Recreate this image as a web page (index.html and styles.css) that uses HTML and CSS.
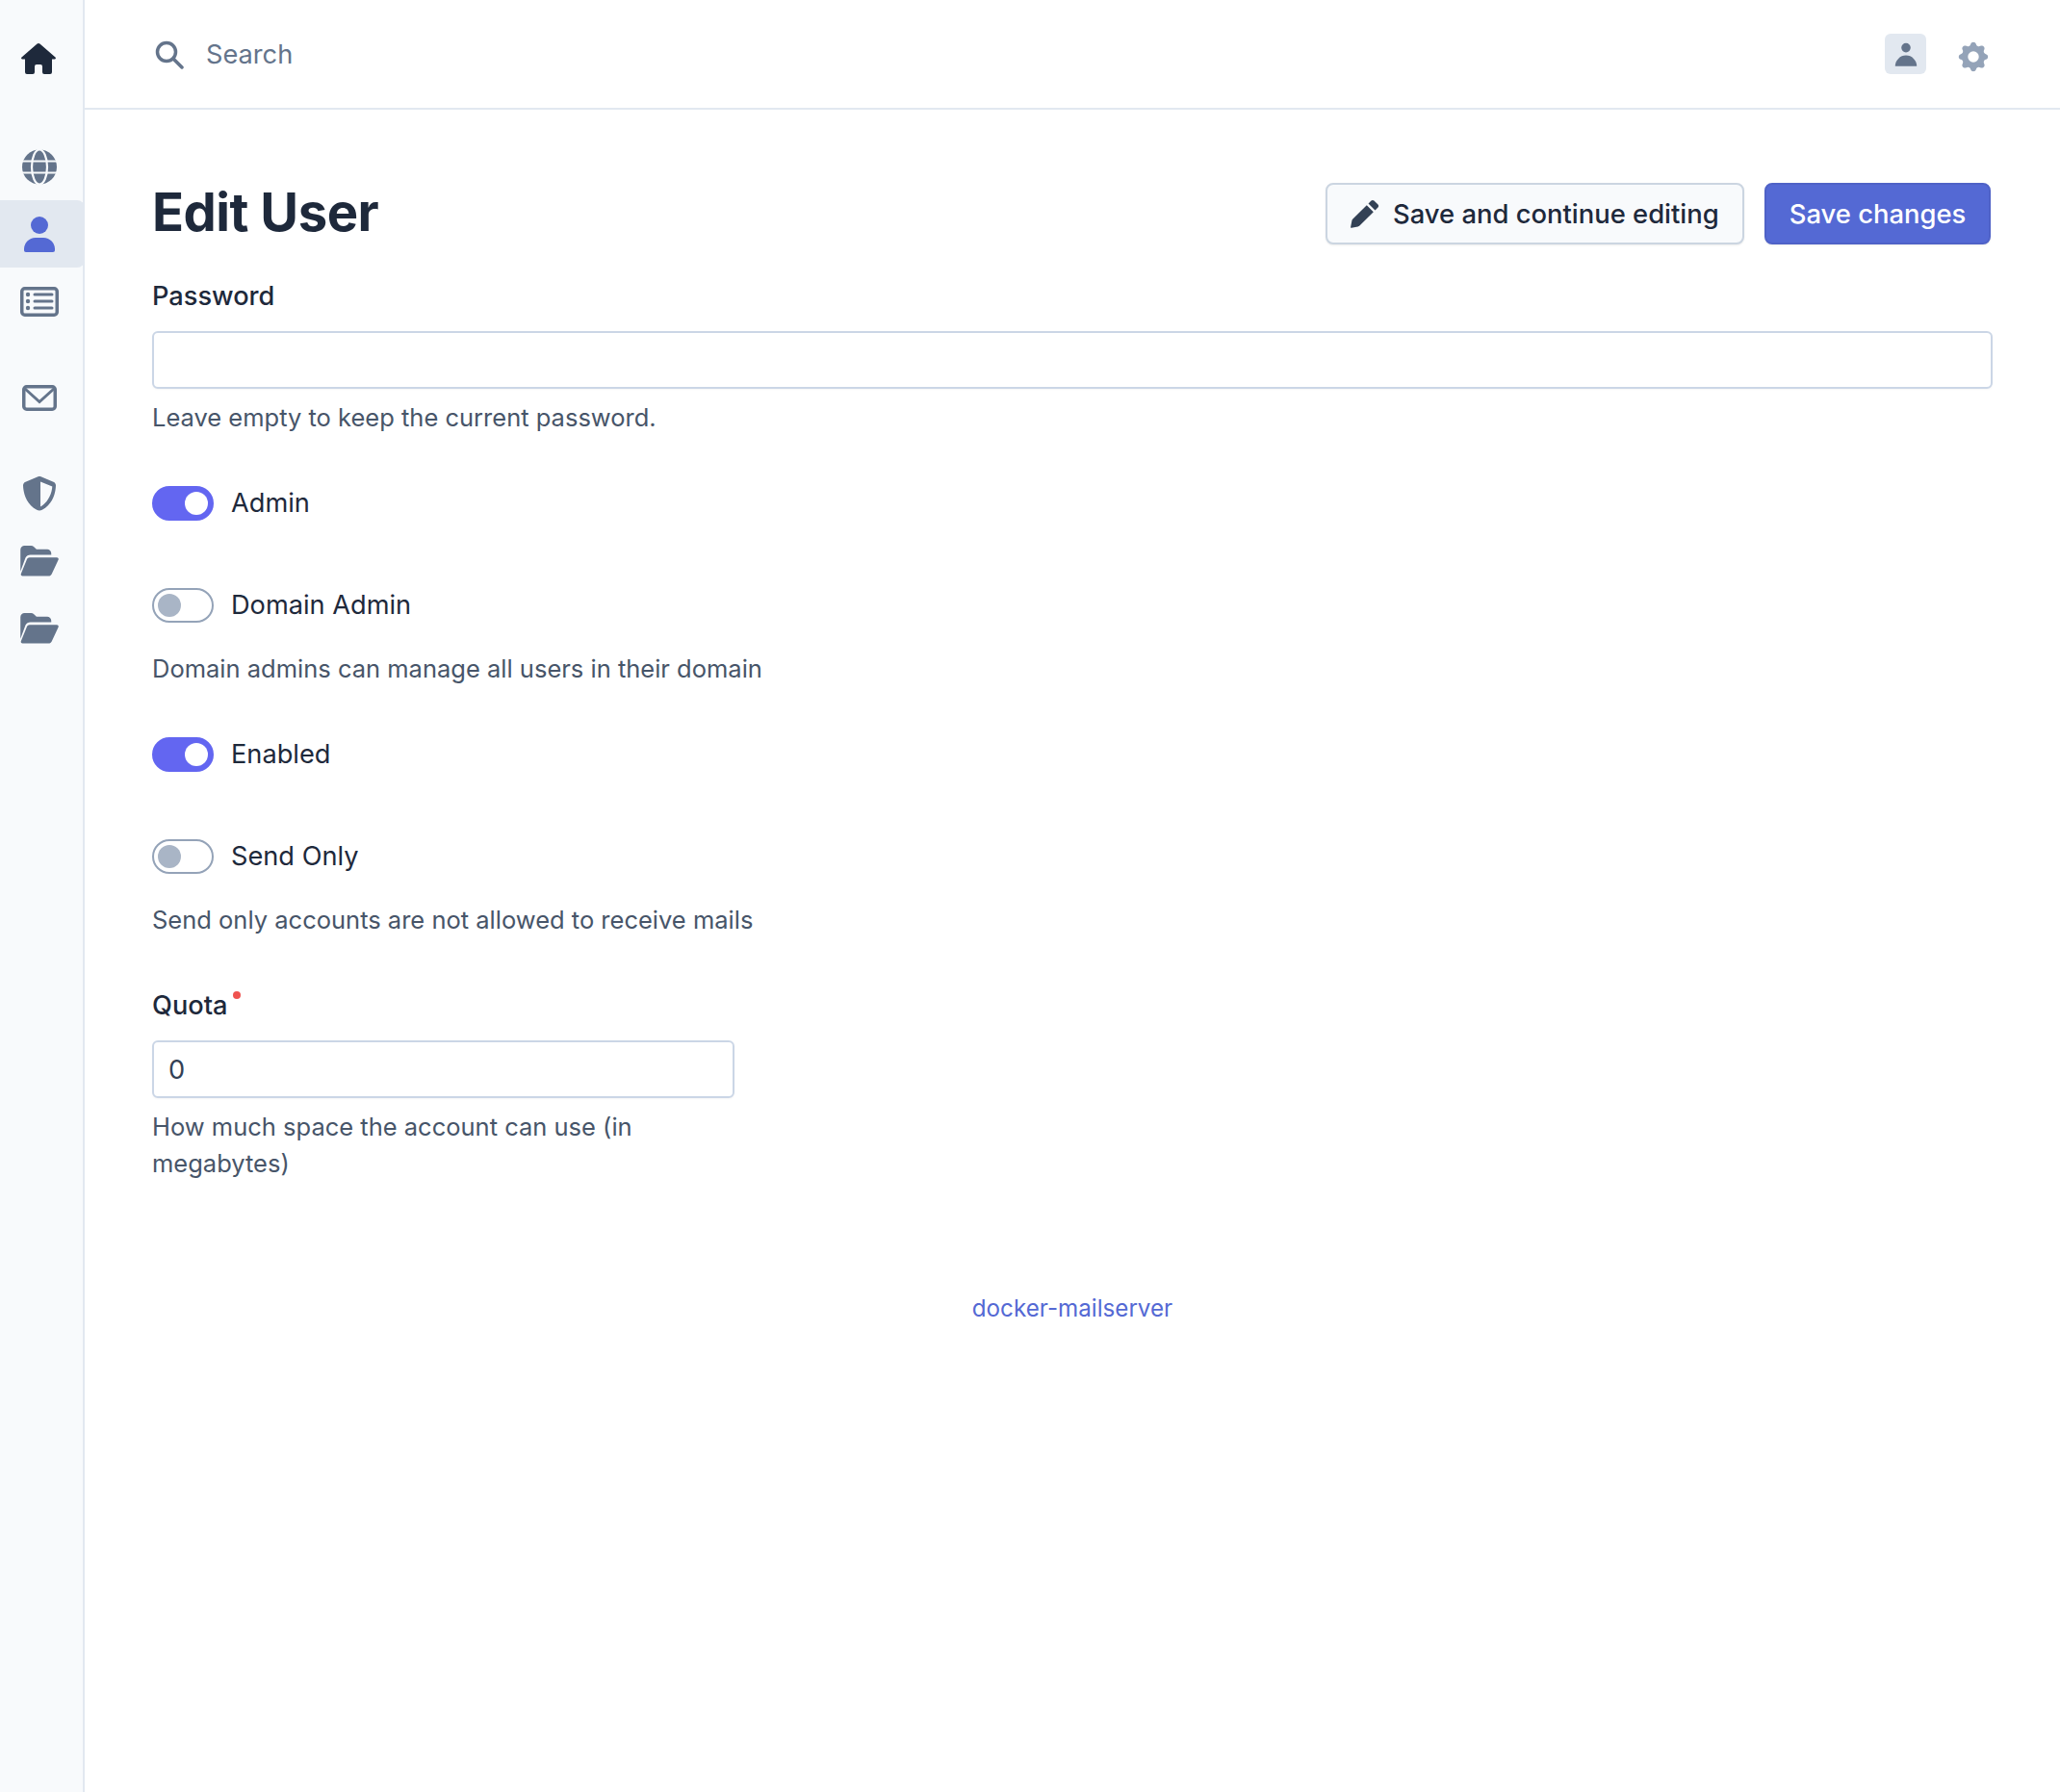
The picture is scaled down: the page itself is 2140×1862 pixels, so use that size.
FILE: index.html
```html
<!DOCTYPE html>
<html lang="en">
<head>
<meta charset="utf-8">
<title>Edit User</title>
<link rel="stylesheet" href="styles.css">
</head>
<body>
<div class="app">
  <nav class="sidebar">
    <a class="nav-item nav-home"><svg class="ic" viewBox="0 0 40 40"><path class="navy" d="M19 3c.5 0 1 .2 1.400.5L36.500 17.500c.8.7.4 2-.7 2H33V33a2 2 0 0 1-2 2h-6a2 2 0 0 1-2-2v-6a2 2 0 0 0-2-2h-4a2 2 0 0 0-2 2v6a2 2 0 0 1-2 2H7a2 2 0 0 1-2-2V19.500H2.200c-1.100 0-1.500-1.300-.7-2L17.600 3.500C18 3.200 18.500 3 19 3z"/></svg></a>
    <div class="nav-group nav-group-first">
      <a class="nav-item"><svg class="ic" viewBox="0 0 40 40"><circle class="slate" cx="20" cy="20.500" r="18"/><g class="cut"><ellipse cx="20" cy="20.500" rx="8" ry="18"/><path d="M2 14.500h36M2 26.500h36"/></g></svg></a>
      <a class="nav-item nav-active"><svg class="ic" viewBox="0 0 40 40"><circle class="indigo" cx="20" cy="11" r="9"/><path class="indigo" d="M4 37a12 12 0 0 1 12-13h8a12 12 0 0 1 12 13c0 1-.7 2-2 2H6c-1.300 0-2-1-2-2z"/></svg></a>
      <a class="nav-item"><svg class="ic" viewBox="0 0 40 40"><rect class="line thick" x="1.750" y="6.750" width="36.500" height="27.500" rx="3"/><circle class="slate" cx="8" cy="13" r="2.200"/><circle class="slate" cx="8" cy="20" r="2.200"/><circle class="slate" cx="8" cy="27" r="2.200"/><path class="line round" d="M15 13h18M15 20h18M15 27h18"/></svg></a>
    </div>
    <div class="nav-group">
      <a class="nav-item"><svg class="ic" viewBox="0 0 40 40"><rect class="line thick" x="3.750" y="8.750" width="32.500" height="23.500" rx="3"/><path class="line" d="M4.500 10.500L20 24.500l15.500-14"/></svg></a>
    </div>
    <div class="nav-group">
      <a class="nav-item"><svg class="ic" viewBox="0 0 40 40"><path class="slate" fill-rule="evenodd" d="M20 2c.5 0 1 .1 1.500.3L34.500 7.800c1.500.6 2.500 2 2.500 3.600-.1 6.600-2.800 19.500-14.200 25.400-1.800.9-3.800.9-5.600 0C5.800 30.900 3.100 18 3 11.400c0-1.600 1-3 2.500-3.600L18.500 2.300C19 2.100 19.500 2 20 2zm1 5.500v26c7.500-4.200 11.800-13 12.300-21z"/></svg></a>
      <a class="nav-item"><svg class="ic ic-folder" viewBox="0 0 42 34"><path class="slate" d="M0 28.500V4.500C0 2 2 0 4.500 0h7.200c1.200 0 2.300.5 3.200 1.300L17.700 4h11.800c2.500 0 4.500 2 4.500 4.500V10H11c-2.300 0-4.400 1.300-5.400 3.400L0 28.500z"/><path class="slate" d="M10.100 13h30.100c1.400 0 2.200 1.400 1.600 2.600l-7.300 15.700c-.6 1.300-1.900 2.200-3.400 2.200H2.300c-1.400 0-2.200-1.400-1.600-2.600L7.200 15c.6-1.200 1.600-2 2.900-2z"/></svg></a>
      <a class="nav-item"><svg class="ic ic-folder" viewBox="0 0 42 34"><path class="slate" d="M0 28.500V4.500C0 2 2 0 4.500 0h7.200c1.200 0 2.300.5 3.200 1.300L17.700 4h11.800c2.500 0 4.500 2 4.500 4.500V10H11c-2.300 0-4.400 1.300-5.400 3.400L0 28.500z"/><path class="slate" d="M10.100 13h30.100c1.400 0 2.200 1.400 1.600 2.600l-7.300 15.700c-.6 1.300-1.900 2.200-3.400 2.200H2.300c-1.400 0-2.200-1.400-1.600-2.600L7.200 15c.6-1.200 1.600-2 2.900-2z"/></svg></a>
    </div>
  </nav>
  <div class="main">
    <header class="topbar">
      <div class="search">
        <svg class="search-ic" viewBox="0 0 30 30"><circle class="line thick" cx="12" cy="12" r="9.500"/><path class="line thick round" d="M19 19l9 9"/></svg>
        <span>Search</span>
      </div>
      <div class="top-actions">
        <span class="avatar"><svg viewBox="0 0 20 20"><path class="slate" d="M10 9a3 3 0 100-6 3 3 0 000 6zm-7 9a7 7 0 1114 0H3z"/></svg></span>
        <svg class="gear" viewBox="0 0 20 20"><path fill-rule="evenodd" d="M11.490 3.170c-.38-1.560-2.600-1.560-2.980 0a1.532 1.532 0 01-2.286.948c-1.372-.836-2.942.734-2.106 2.106.54.886.061 2.042-.947 2.287-1.561.379-1.561 2.600 0 2.978a1.532 1.532 0 01.947 2.287c-.836 1.372.734 2.942 2.106 2.106a1.532 1.532 0 012.287.947c.379 1.561 2.600 1.561 2.978 0a1.533 1.533 0 012.287-.947c1.372.836 2.942-.734 2.106-2.106a1.533 1.533 0 01.947-2.287c1.561-.379 1.561-2.600 0-2.978a1.532 1.532 0 01-.947-2.287c.836-1.372-.734-2.942-2.106-2.106a1.532 1.532 0 01-2.287-.947zM10 13a3 3 0 100-6 3 3 0 000 6z"/></svg>
      </div>
    </header>
    <main class="content">
      <div class="title-row">
        <h1>Edit User</h1>
        <div class="actions">
          <button class="btn btn-light"><svg class="pencil" viewBox="0 0 30 30"><path d="M21.500 1.500c.8-.8 2.100-.8 2.900 0l4.100 4.100c.8.800.8 2.100 0 2.900l-3 3-7-7zM16.800 6.200l7 7-14.400 14.400c-.5.500-1.100.8-1.800 1L1 29.800c-.5.100-1-.3-.9-.9l1.300-6.600c.1-.7.5-1.300 1-1.800z"/></svg>Save and continue editing</button>
          <button class="btn btn-primary">Save changes</button>
        </div>
      </div>
      <label class="label label-password">Password</label>
      <div class="input"></div>
      <p class="help help-input">Leave empty to keep the current password.</p>
      <div class="toggle-row first-a"><span class="toggle on"></span><span>Admin</span></div>
      <div class="toggle-row"><span class="toggle"></span><span>Domain Admin</span></div>
      <p class="help help-toggle">Domain admins can manage all users in their domain</p>
      <div class="toggle-row first-b"><span class="toggle on"></span><span>Enabled</span></div>
      <div class="toggle-row"><span class="toggle"></span><span>Send Only</span></div>
      <p class="help help-toggle">Send only accounts are not allowed to receive mails</p>
      <div class="quota">
        <label class="label label-quota">Quota<span class="req"></span></label>
        <div class="input">0</div>
        <p class="help help-quota">How much space the account can use (in megabytes)</p>
      </div>
      <footer class="footer"><a>docker-mailserver</a></footer>
    </main>
  </div>
</div>
</body>
</html>
```

FILE: styles.css
```css
* { box-sizing: border-box; }
html, body { margin: 0; padding: 0; background: #fff; }
body { font-family: Inter, "Liberation Sans", sans-serif; color: #1e293b; font-size: 27.2px; }
.app { display: flex; min-height: 1862px; }

.sidebar { width: 88px; flex: none; background: #f8fafc; border-right: 2px solid #e2e8f0; padding-top: 27px; }
.nav-item { display: flex; height: 70px; margin-right: -2px; align-items: center; justify-content: center; padding-right: 6px; }
.nav-active { background: #e2e8f0; border-radius: 0 8px 8px 0; }
.nav-group { margin-top: 30px; }
.nav-group-first { margin-top: 41px; }
.ic { width: 40px; height: 40px; display: block; }
.ic-folder { width: 40px; height: 32px; }
.navy { fill: #1e293b; }
.slate { fill: #64748b; }
.indigo { fill: #5469d4; }
.line { fill: none; stroke: #64748b; stroke-width: 3; }
.thick { stroke-width: 3.500; }
.round { stroke-linecap: round; }
.cut { fill: none; stroke: #f8fafc; stroke-width: 2.200; }

.main { flex: 1; min-width: 0; }
.topbar { height: 114px; border-bottom: 2px solid #e2e8f0; display: flex; align-items: center; justify-content: space-between; padding: 0 70px; }
.search { display: flex; align-items: center; gap: 23px; color: #64748b; margin-left: 3px; }
.search-ic { width: 30px; height: 30px; display: block; margin-top: 2px; }
.top-actions { display: flex; align-items: center; gap: 30px; padding-right: 1px; }
.avatar { width: 43px; height: 42px; background: #e2e8f0; border-radius: 6px; display: flex; align-items: center; justify-content: center; }
.avatar svg { width: 32px; height: 32px; display: block; }
.gear { width: 38px; height: 38px; display: block; fill: #94a3b8; margin-top: 6px; }

.content { padding: 76px 70px 0; }
.title-row { display: flex; align-items: center; justify-content: space-between; height: 64px; }
h1 { margin: -5px 0 0; font-size: 54.4px; line-height: 64px; font-weight: 700; letter-spacing: -.5px; }
.actions { display: flex; gap: 21px; padding-right: 2px; }
.btn { height: 64px; border-radius: 8px; font: 500 27.4px Inter, "Liberation Sans", sans-serif; display: flex; align-items: center; box-shadow: 0 1px 2px rgba(0,0,0,.08); }
.btn-light { width: 435px; padding: 0 0 0 24px; gap: 14px; color: #1e293b; background: #f8fafc; border: 2px solid #cbd5e1; }
.btn-primary { width: 235px; justify-content: center; color: #fff; background: #5469d4; border: 2px solid #4f62c7; }
.pencil { width: 30px; height: 30px; fill: #334155; display: block; flex: none; }

.label { display: block; height: 40px; line-height: 42px; font-weight: 500; }
.label-password { margin-top: 33px; }
.input { height: 60px; margin-top: 17px; border: 2px solid #cbd6e6; border-radius: 6px; background: #fff; padding: 0 15px; line-height: 58px; color: #334155; box-shadow: 0 1px 2px rgba(0,0,0,.04); }
.help { margin: 0; line-height: 38px; color: #475569; font-size: 25.5px; }
.help-input { margin-top: 11px; }
.help-toggle { margin-top: 29px; }
.help-quota { margin-top: 11px; }

.toggle-row { display: flex; align-items: center; gap: 18px; height: 36px; margin-top: 70px; line-height: 34px; }
.first-a { margin-top: 52px; }
.first-b { margin-top: 52px; }
.toggle { width: 64px; height: 36px; border-radius: 18px; border: 2px solid #94a3b8; background: #fff; display: flex; align-items: center; padding: 0 4px; flex: none; }
.toggle::before { content: ""; width: 24px; height: 24px; border-radius: 50%; background: #a9b5c6; }
.toggle.on { background: #6366f1; border-color: #6366f1; justify-content: flex-end; }
.toggle.on::before { background: #fff; }

.quota { width: 605px; margin-top: 49px; }
.label-quota { position: relative; }
.req { position: absolute; left: 84px; top: 6px; width: 8px; height: 8px; border-radius: 50%; background: #ef5350; }
.footer { margin-top: 113px; text-align: center; line-height: 38px; color: #5469d4; font-size: 24.2px; }
```
